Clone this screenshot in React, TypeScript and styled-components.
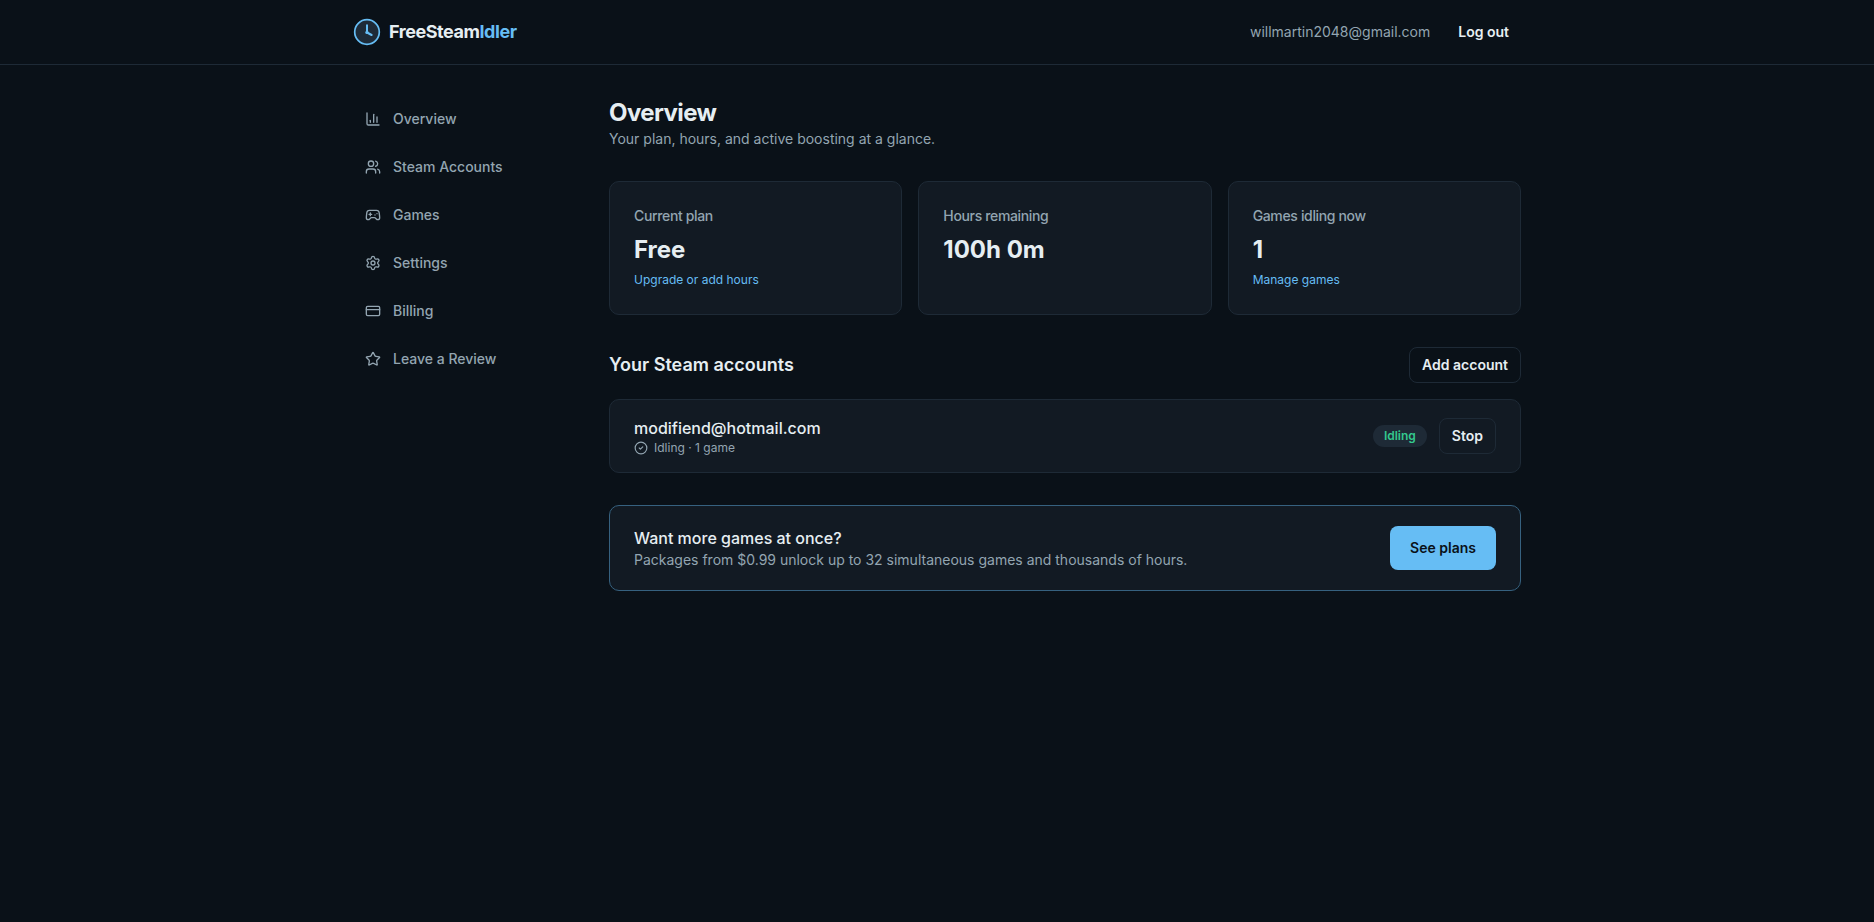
import React from "react";
import styled, { createGlobalStyle, css } from "styled-components";
import {
  ChartColumn,
  CircleCheck,
  CreditCard,
  Gamepad2,
  Settings,
  Star,
  Users,
} from "lucide-react";

const color = {
  bg: "#0a1118",
  card: "#121a23",
  border: "#1e2a36",
  text: "#e6eef2",
  muted: "#93a5b1",
  accent: "#66bdf4",
  accentBorder: "#36617f",
  green: "#34c98e",
  pill: "#1e2a36",
};

const GlobalStyle = createGlobalStyle`
  *, *::before, *::after { box-sizing: border-box; }
  body {
    margin: 0;
    background: ${color.bg};
    color: ${color.text};
    font-family: Inter, "Liberation Sans", sans-serif;
    font-size: 16px;
    line-height: 24px;
  }
  h1, h2, p { margin: 0; }
`;

const Page = styled.div`
  min-height: 100vh;
`;

const container = css`
  width: 100%;
  max-width: 1216px;
  margin: 0 auto;
  padding: 0 24px;
`;

const Header = styled.header`
  border-bottom: 1px solid ${color.border};
`;

const HeaderInner = styled.div`
  ${container}
  height: 64px;
  display: flex;
  align-items: center;
  justify-content: space-between;
`;

const Brand = styled.div`
  display: flex;
  align-items: center;
  gap: 8px;
  font-size: 18px;
  font-weight: 700;
  letter-spacing: -0.45px;
`;

const BrandAccent = styled.span`
  color: ${color.accent};
`;

const UserArea = styled.div`
  display: flex;
  align-items: center;
  gap: 16px;
`;

const UserEmail = styled.span`
  font-size: 14px;
  color: ${color.muted};
`;

const Button = styled.button<{ $kind: "ghost" | "outline" | "primary" }>`
  display: inline-flex;
  align-items: center;
  justify-content: center;
  height: ${(p) => (p.$kind === "primary" ? 44 : 36)}px;
  padding: 0 ${(p) => (p.$kind === "primary" ? 20 : 12)}px;
  border: ${(p) => (p.$kind === "outline" ? `1px solid ${color.border}` : "0")};
  border-radius: 8px;
  background: ${(p) => (p.$kind === "primary" ? color.accent : "transparent")};
  color: ${(p) => (p.$kind === "primary" ? color.bg : color.text)};
  font: 600 14px/20px Inter, "Liberation Sans", sans-serif;
  white-space: nowrap;
`;

const Body = styled.div`
  ${container}
  display: grid;
  grid-template-columns: 224px 1fr;
  gap: 32px;
  padding-top: 32px;
`;

const Nav = styled.nav`
  display: flex;
  flex-direction: column;
  gap: 4px;
`;

const NavItem = styled.a`
  display: flex;
  align-items: center;
  gap: 12px;
  height: 44px;
  padding: 0 12px;
  font-size: 14px;
  font-weight: 500;
  color: ${color.muted};
`;

const Main = styled.main`
  display: flex;
  flex-direction: column;
  gap: 32px;
`;

const PageTitle = styled.h1`
  font-size: 24px;
  line-height: 32px;
  font-weight: 700;
  letter-spacing: -0.6px;
`;

const Sub = styled.p`
  font-size: 14px;
  line-height: 20px;
  color: ${color.muted};
`;

const Stats = styled.div`
  display: grid;
  grid-template-columns: repeat(3, 1fr);
  gap: 16px;
`;

const Card = styled.div<{ $accent?: boolean }>`
  border: 1px solid ${(p) => (p.$accent ? color.accentBorder : color.border)};
  border-radius: 10px;
  background: ${color.card};
`;

const StatCard = styled(Card)`
  height: 134px;
  padding: 24px;
`;

const StatLabel = styled(Sub)`
  font-weight: 500;
  letter-spacing: -0.35px;
`;

const StatValue = styled.p`
  margin-top: 8px;
  font-size: 24px;
  line-height: 32px;
  font-weight: 700;
`;

const StatLink = styled.a`
  display: block;
  margin-top: 6px;
  font-size: 12px;
  line-height: 16px;
  color: ${color.accent};
`;

const Section = styled.section`
  display: flex;
  flex-direction: column;
  gap: 16px;
`;

const SectionHead = styled.div`
  display: flex;
  align-items: center;
  justify-content: space-between;
`;

const SectionTitle = styled.h2`
  font-size: 18px;
  line-height: 28px;
  font-weight: 600;
`;

const RowCard = styled(Card)<{ $height: number }>`
  display: flex;
  align-items: center;
  justify-content: space-between;
  height: ${(p) => p.$height}px;
  padding: 0 24px;
`;

const RowTitle = styled.p`
  font-weight: 500;
`;

const Status = styled.p`
  display: flex;
  align-items: center;
  gap: 6px;
  font-size: 12px;
  line-height: 16px;
  color: ${color.muted};
`;

const Actions = styled.div`
  display: flex;
  align-items: center;
  gap: 12px;
`;

const Pill = styled.span`
  padding: 3px 11px;
  border-radius: 999px;
  background: ${color.pill};
  color: ${color.green};
  font-size: 12px;
  line-height: 16px;
  font-weight: 600;
`;

const Logo = () => (
  <svg width="28" height="28" viewBox="0 0 28 28" fill="none">
    <circle cx="14" cy="14" r="12.3" fill="#1e2b38" stroke={color.accent} strokeWidth="1.7" />
    <path
      d="M14 7.2V14.5L18.6 17"
      stroke={color.accent}
      strokeWidth="2"
      strokeLinecap="round"
      strokeLinejoin="round"
    />
    <circle cx="14" cy="14.4" r="1.7" fill={color.accent} />
  </svg>
);

const navItems = [
  { label: "Overview", Icon: ChartColumn },
  { label: "Steam Accounts", Icon: Users },
  { label: "Games", Icon: Gamepad2 },
  { label: "Settings", Icon: Settings },
  { label: "Billing", Icon: CreditCard },
  { label: "Leave a Review", Icon: Star },
];

const stats = [
  { label: "Current plan", value: "Free", link: "Upgrade or add hours" },
  { label: "Hours remaining", value: "100h 0m" },
  { label: "Games idling now", value: "1", link: "Manage games" },
];

export default function App() {
  return (
    <Page>
      <GlobalStyle />
      <Header>
        <HeaderInner>
          <Brand>
            <Logo />
            <span>
              FreeSteam<BrandAccent>Idler</BrandAccent>
            </span>
          </Brand>
          <UserArea>
            <UserEmail>willmartin2048@gmail.com</UserEmail>
            <Button $kind="ghost">Log out</Button>
          </UserArea>
        </HeaderInner>
      </Header>
      <Body>
        <Nav>
          {navItems.map(({ label, Icon }) => (
            <NavItem key={label}>
              <Icon size={16} />
              {label}
            </NavItem>
          ))}
        </Nav>
        <Main>
          <div>
            <PageTitle>Overview</PageTitle>
            <Sub>Your plan, hours, and active boosting at a glance.</Sub>
          </div>
          <Stats>
            {stats.map((s) => (
              <StatCard key={s.label}>
                <StatLabel>{s.label}</StatLabel>
                <StatValue>{s.value}</StatValue>
                {s.link && <StatLink>{s.link}</StatLink>}
              </StatCard>
            ))}
          </Stats>
          <Section>
            <SectionHead>
              <SectionTitle>Your Steam accounts</SectionTitle>
              <Button $kind="outline">Add account</Button>
            </SectionHead>
            <RowCard $height={74}>
              <div>
                <RowTitle>modifiend@hotmail.com</RowTitle>
                <Status>
                  <CircleCheck size={14} />
                  Idling · 1 game
                </Status>
              </div>
              <Actions>
                <Pill>Idling</Pill>
                <Button $kind="outline">Stop</Button>
              </Actions>
            </RowCard>
          </Section>
          <RowCard $accent $height={86}>
            <div>
              <RowTitle>Want more games at once?</RowTitle>
              <Sub>Packages from $0.99 unlock up to 32 simultaneous games and thousands of hours.</Sub>
            </div>
            <Button $kind="primary">See plans</Button>
          </RowCard>
        </Main>
      </Body>
    </Page>
  );
}
